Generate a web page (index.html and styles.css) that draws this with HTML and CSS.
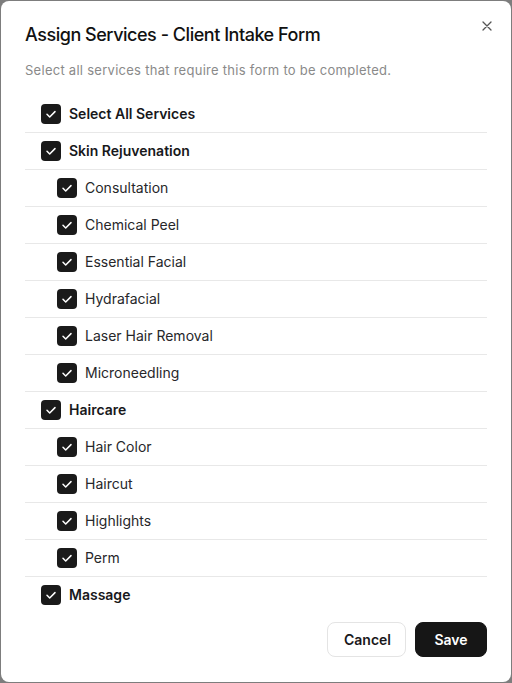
FILE: index.html
```html
<!DOCTYPE html>
<html>
<head>
<meta charset="utf-8">
<link rel="stylesheet" href="styles.css">
</head>
<body>
<div class="dialog">
  <button class="close" aria-label="Close">
    <svg width="10" height="10" viewBox="0 0 10 10"><path d="M1 1L9 9M9 1L1 9" stroke="#555" stroke-width="1.3" stroke-linecap="round"/></svg>
  </button>
  <h1 class="title">Assign Services - Client Intake Form</h1>
  <p class="desc">Select all services that require this form to be completed.</p>
  <ul class="list">
    <li class="row parent"><span class="cb"><svg viewBox="0 0 20 20"><path d="M6 10.3L8.7 13L14 7.6"/></svg></span>Select All Services</li>
    <li class="row parent"><span class="cb"><svg viewBox="0 0 20 20"><path d="M6 10.3L8.7 13L14 7.6"/></svg></span>Skin Rejuvenation</li>
    <li class="row child"><span class="cb"><svg viewBox="0 0 20 20"><path d="M6 10.3L8.7 13L14 7.6"/></svg></span>Consultation</li>
    <li class="row child"><span class="cb"><svg viewBox="0 0 20 20"><path d="M6 10.3L8.7 13L14 7.6"/></svg></span>Chemical Peel</li>
    <li class="row child"><span class="cb"><svg viewBox="0 0 20 20"><path d="M6 10.3L8.7 13L14 7.6"/></svg></span>Essential Facial</li>
    <li class="row child"><span class="cb"><svg viewBox="0 0 20 20"><path d="M6 10.3L8.7 13L14 7.6"/></svg></span>Hydrafacial</li>
    <li class="row child"><span class="cb"><svg viewBox="0 0 20 20"><path d="M6 10.3L8.7 13L14 7.6"/></svg></span>Laser Hair Removal</li>
    <li class="row child"><span class="cb"><svg viewBox="0 0 20 20"><path d="M6 10.3L8.7 13L14 7.6"/></svg></span>Microneedling</li>
    <li class="row parent"><span class="cb"><svg viewBox="0 0 20 20"><path d="M6 10.3L8.7 13L14 7.6"/></svg></span>Haircare</li>
    <li class="row child"><span class="cb"><svg viewBox="0 0 20 20"><path d="M6 10.3L8.7 13L14 7.6"/></svg></span>Hair Color</li>
    <li class="row child"><span class="cb"><svg viewBox="0 0 20 20"><path d="M6 10.3L8.7 13L14 7.6"/></svg></span>Haircut</li>
    <li class="row child"><span class="cb"><svg viewBox="0 0 20 20"><path d="M6 10.3L8.7 13L14 7.6"/></svg></span>Highlights</li>
    <li class="row child"><span class="cb"><svg viewBox="0 0 20 20"><path d="M6 10.3L8.7 13L14 7.6"/></svg></span>Perm</li>
    <li class="row parent last"><span class="cb"><svg viewBox="0 0 20 20"><path d="M6 10.3L8.7 13L14 7.6"/></svg></span>Massage</li>
  </ul>
  <div class="actions">
    <button class="btn cancel">Cancel</button>
    <button class="btn save">Save</button>
  </div>
</div>
</body>
</html>
```
FILE: styles.css
```css
* { box-sizing: border-box; }
html, body { margin: 0; padding: 0; }
body {
  background: #7d7d7d;
  font-family: Inter, "Liberation Sans", sans-serif;
  color: #18181b;
  width: 512px;
  height: 683px;
  padding: 1px;
}
.dialog {
  position: relative;
  background: #fff;
  border-radius: 8px;
  height: 681px;
  width: 510px;
  padding: 22px 24px 25px 24px;
  display: flex;
  flex-direction: column;
}
.close {
  position: absolute;
  top: 19px;
  right: 18px;
  width: 12px;
  height: 12px;
  padding: 1px;
  border: 0;
  background: none;
  display: flex;
}
.title {
  margin: 0;
  font-size: 18px;
  line-height: 24px;
  font-weight: 500;
  letter-spacing: -0.47px;
  color: #111;
}
.desc {
  margin: 13px 0 0 0;
  font-size: 13px;
  line-height: 20px;
  letter-spacing: 0.27px;
  color: #8a8a8a;
}
.list {
  list-style: none;
  margin: 16px 0 0 0;
  padding: 0;
}
.row {
  display: flex;
  align-items: center;
  height: 37px;
  border-bottom: 1px solid #e8e8e8;
  font-size: 14px;
  padding-bottom: 1px;
}
.row.last { border-bottom: 0; height: 36px; }
.row.parent { padding-left: 16px; font-weight: 600; }
.row.child { padding-left: 32px; font-weight: 400; color: #27272a; }
.cb {
  width: 20px;
  height: 20px;
  border-radius: 4px;
  background: #1a1a1a;
  margin-right: 8px;
  flex: none;
  display: flex;
  margin-top: 1px;
}
.cb svg {
  width: 20px;
  height: 20px;
  fill: none;
  stroke: #fff;
  stroke-width: 1.5;
  stroke-linecap: round;
  stroke-linejoin: round;
}
.actions {
  display: flex;
  justify-content: flex-end;
  gap: 9px;
  margin-top: 9px;
}
.btn {
  height: 35px;
  border-radius: 8px;
  font-family: Inter, "Liberation Sans", sans-serif;
  font-size: 14px;
  font-weight: 600;
  padding: 0 16px;
}
.cancel {
  background: #fff;
  border: 1px solid #e4e4e4;
  color: #18181b;
  width: 79px;
}
.save {
  background: #161616;
  border: 1px solid #161616;
  color: #fff;
  width: 72px;
}
```
